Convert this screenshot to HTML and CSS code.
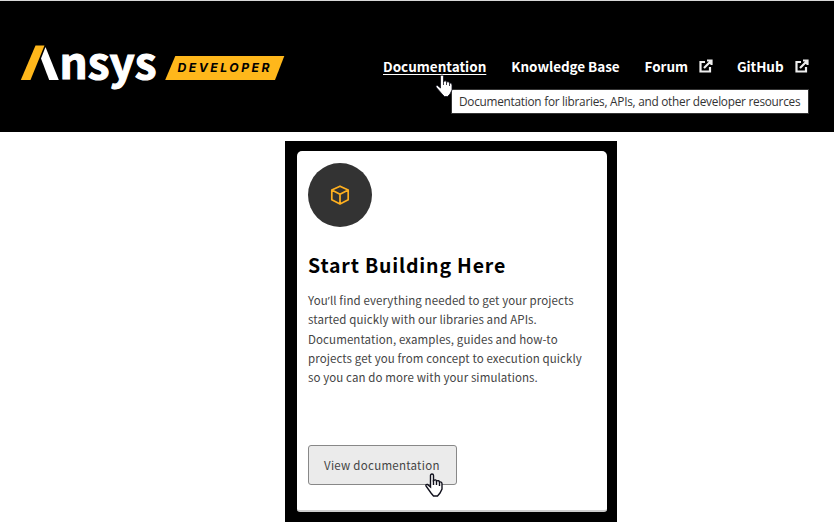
FILE: index.html
```html
<!DOCTYPE html>
<html lang="en">
<head>
<meta charset="utf-8">
<title>Ansys Developer</title>
<link rel="stylesheet" href="styles.css">
</head>
<body>
<header class="header">
  <svg class="logo" width="266" height="60" viewBox="20 40 266 60" role="img" aria-label="Ansys Developer">
    <path d="M35.5 45.5H44.5L30.5 80H20.8Z" fill="#ffb71b"/>
    <path d="M45.5 47L58.8 80H49.2L41 58.5Z" fill="#fff"/>
    <text class="logo-name" x="59.500" y="79.300" textLength="97" lengthAdjust="spacingAndGlyphs">nsys</text>
    <path d="M175.3 56H284.3L275 80H165.2Z" fill="#ffb71b"/>
    <text class="logo-tag" x="177.500" y="72.200" textLength="92">DEVELOPER</text>
  </svg>
  <nav class="nav">
    <a class="link active">Documentation</a>
    <a class="link">Knowledge Base</a>
    <a class="link">Forum <svg class="ext" viewBox="0 0 14 14"><path d="M6 3H1.500V12.500H11V8M5 9L11.500 2.500M8 1.500H12.500V6"/></svg></a>
    <a class="link">GitHub <svg class="ext" viewBox="0 0 14 14"><path d="M6 3H1.500V12.500H11V8M5 9L11.500 2.500M8 1.500H12.500V6"/></svg></a>
  </nav>
  <div class="tooltip">Documentation for libraries, APIs, and other developer resources</div>
  <svg class="hand hand-nav" viewBox="0 0 18 24"><path d="M5.500 14V2.500Q5.500 1 7 1T8.500 2.500V7.500Q11 6 11.500 8Q14 7 14.500 9Q17 8.500 17 11V16L15 20L12.500 22.500H9.500L7 20L1 13Q0.500 11 2.500 11.500Z"/><path d="M8.500 7V11M11.500 8V11M14.500 9V12"/></svg>
</header>
<main class="stage">
  <section class="card">
    <div class="badge"><svg class="cube" viewBox="0 0 20 20"><path d="M10 1.200L18.200 5V14.800L10 19L1.800 14.800V5ZM1.800 5L10 9.300L18.200 5M10 9.300V19"/></svg></div>
    <h1 class="title">Start Building Here</h1>
    <p class="text">You<span class="apos">’</span>ll find everything needed to get your projects<br>started quickly with our libraries and APIs.<br>Documentation, examples, guides and how-to<br>projects get you from concept to execution quickly<br>so you can do more with your simulations.</p>
    <a class="button">View documentation</a>
    <svg class="hand hand-card" viewBox="0 0 18 24"><path d="M5.500 14V2.500Q5.500 1 7 1T8.500 2.500V7.500Q11 6 11.500 8Q14 7 14.500 9Q17 8.500 17 11V16L15 20L12.500 23H8.500L6 20L1 13Q0.500 11 2.500 11.500Z"/><path d="M8.500 7V12M11.500 8V12M14.500 9V13"/></svg>
  </section>
</main>
</body>
</html>
```

FILE: styles.css
```css
* { box-sizing: border-box; }
body { margin: 0; background: #fff; font-family: "Noto Sans CJK SC", "Open Sans", sans-serif; overflow: hidden; }
.header { position: relative; display: flex; height: 132px; padding: 40px 0 0 20px; background: #000; border-top: 1px solid #d8d8d8; }
.logo { display: block; flex: none; margin-top: -1px; overflow: visible; }
.logo-name { font: 700 42px "Noto Sans CJK SC", sans-serif; fill: #fff; stroke: #fff; stroke-width: 1.100; }
.logo-tag { font: italic 700 12.200px Inter, sans-serif; fill: #000; }
.nav { display: flex; height: 20px; margin: 15px 0 0 97px; color: #fff; }
.link { display: flex; align-items: center; height: 20px; font-size: 13.500px; font-weight: 700; line-height: 20px; letter-spacing: -.06px; white-space: nowrap; margin-right: 25px; }
.active { letter-spacing: 0; text-decoration: underline; text-decoration-thickness: 1px; text-underline-offset: 2px; }
.ext { width: 14px; height: 14px; margin: 0 -1px 0 11px; fill: none; stroke: #eee; stroke-width: 2.200; }
.tooltip { position: absolute; left: 451px; top: 88px; width: 358px; height: 25px; padding-left: 7px; border: 1px solid #333; background: #fff; color: #333; font: 11.800px/23px "Open Sans", sans-serif; letter-spacing: -.25px; white-space: nowrap; }
.hand { position: absolute; width: 18px; height: 24px; fill: #fff; stroke: #10101c; stroke-width: 1.400; }
.hand-nav { left: 435px; top: 73px; stroke-width: .8; }
.stage { width: 332px; height: 381px; margin: 9px 0 0 285px; padding: 10px 10px 10px 12px; background: #000; }
.card { position: relative; display: flex; flex-direction: column; align-items: flex-start; height: 361px; padding: 12px 11px; background: #fff; border-bottom: 2px solid #ccc; border-radius: 5px 5px 3px 3px; }
.badge { display: grid; place-items: center; width: 64px; height: 64px; border-radius: 50%; background: #333; }
.cube { width: 20px; height: 20px; fill: none; stroke: #ffb01f; stroke-width: 1.700; stroke-linejoin: round; }
.title { margin: 23px 0 0; font-size: 19.500px; font-weight: 700; line-height: 30px; letter-spacing: .82px; color: #000; white-space: nowrap; }
.text { height: 97px; margin: 11px 0 0; font-size: 11.500px; line-height: 19.300px; letter-spacing: .1px; color: #444; white-space: nowrap; }
.apos { font-family: "Open Sans", sans-serif; line-height: 1; }
.button { width: 149px; height: 40px; margin-top: 57px; padding-left: 15px; border: 1px solid #888; border-radius: 3px; background: #ebebeb; color: #444; font-size: 11.500px; line-height: 38px; letter-spacing: .27px; white-space: nowrap; }
.hand-card { left: 128px; top: 322px; }
```
